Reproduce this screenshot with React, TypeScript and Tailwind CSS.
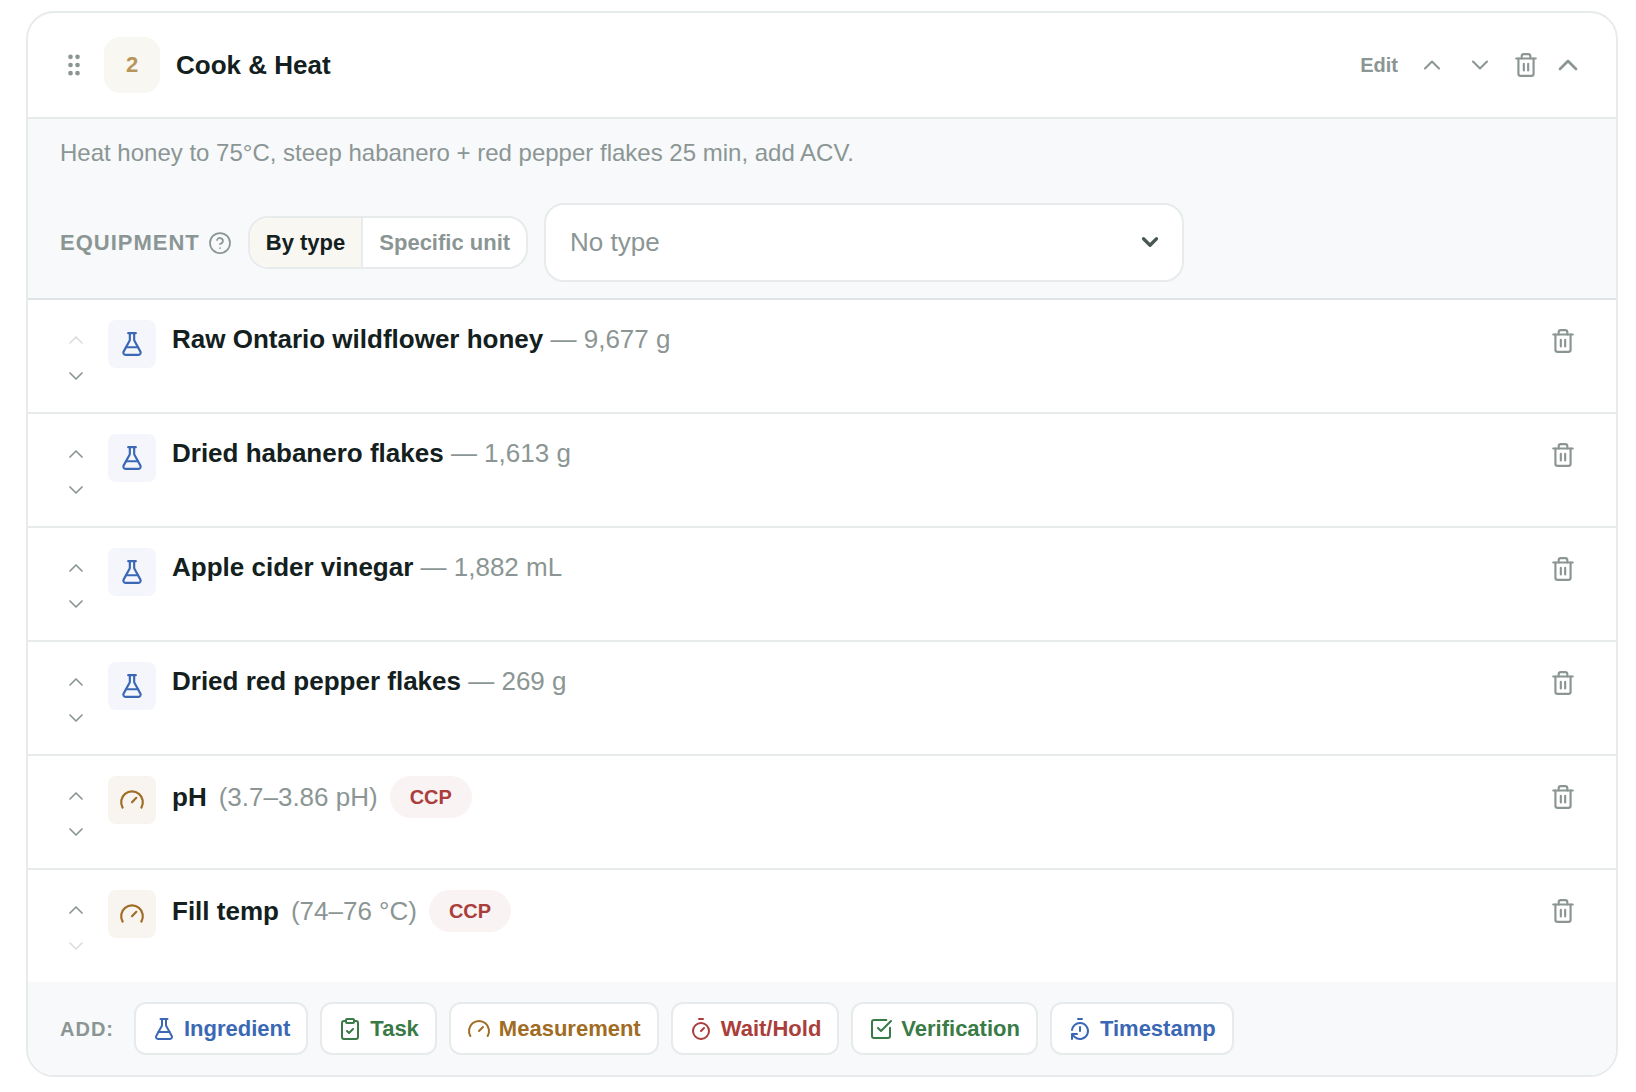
import React, { useState } from "react";
import {
  ChevronDown,
  ChevronUp,
  CircleHelp,
  ClipboardCheck,
  FlaskConical,
  Gauge,
  GripVertical,
  SquareCheckBig,
  Timer,
  TimerReset,
  Trash2,
} from "lucide-react";

type Item = {
  kind: "ingredient" | "measurement";
  name: string;
  detail: string;
  ccp?: boolean;
};

const items: Item[] = [
  { kind: "ingredient", name: "Raw Ontario wildflower honey", detail: "9,677 g" },
  { kind: "ingredient", name: "Dried habanero flakes", detail: "1,613 g" },
  { kind: "ingredient", name: "Apple cider vinegar", detail: "1,882 mL" },
  { kind: "ingredient", name: "Dried red pepper flakes", detail: "269 g" },
  { kind: "measurement", name: "pH", detail: "(3.7–3.86 pH)", ccp: true },
  { kind: "measurement", name: "Fill temp", detail: "(74–76 °C)", ccp: true },
];

const addButtons = [
  { label: "Ingredient", icon: FlaskConical, color: "text-[#3b68b5]" },
  { label: "Task", icon: ClipboardCheck, color: "text-[#3a7a46]" },
  { label: "Measurement", icon: Gauge, color: "text-[#a06c24]" },
  { label: "Wait/Hold", icon: Timer, color: "text-[#a93e3b]" },
  { label: "Verification", icon: SquareCheckBig, color: "text-[#3a7a46]" },
  { label: "Timestamp", icon: TimerReset, color: "text-[#3b68b5]" },
];

function ItemRow({ item, first, last }: { item: Item; first: boolean; last: boolean }) {
  const ingredient = item.kind === "ingredient";
  return (
    <li className="flex items-start gap-4 px-8 py-5 border-b-2 border-[#e7ebeb] last:border-b-0">
      <div className="flex flex-col gap-1 pt-1 text-[#8b9694]">
        <button
          aria-label="Move item up"
          disabled={first}
          className="flex size-8 items-center justify-center disabled:opacity-30"
        >
          <ChevronUp size={24} strokeWidth={1.75} />
        </button>
        <button
          aria-label="Move item down"
          disabled={last}
          className="flex size-8 items-center justify-center disabled:opacity-30"
        >
          <ChevronDown size={24} strokeWidth={1.75} />
        </button>
      </div>
      {ingredient ? (
        <span className="flex size-12 items-center justify-center rounded-lg bg-[#f4f6fb] text-[#3b68b5]">
          <FlaskConical size={26} />
        </span>
      ) : (
        <span className="flex size-12 items-center justify-center rounded-lg bg-[#f8f4ef] text-[#a06c24]">
          <Gauge size={26} />
        </span>
      )}
      {ingredient ? (
        <p className="flex-1 text-[26px] leading-[39px] text-[#8b9694]">
          <strong className="font-bold text-[#13201e]">{item.name}</strong> — {item.detail}
        </p>
      ) : (
        <div className="flex flex-1 items-center gap-3 text-[26px] leading-[39px] text-[#8b9694]">
          <strong className="font-bold text-[#13201e]">{item.name}</strong>
          <span>{item.detail}</span>
          {item.ccp && (
            <span className="rounded-full bg-[#faf3f4] px-5 py-1.5 text-[20px] leading-[30px] font-bold text-[#a93e3b]">
              CCP
            </span>
          )}
        </div>
      )}
      <button aria-label="Delete item" className="p-2 text-[#8b9694]">
        <Trash2 size={26} />
      </button>
    </li>
  );
}

export default function App() {
  const [mode, setMode] = useState("type");
  return (
    <div className="bg-white py-[11px] pr-[18px] pl-[26px] font-['Liberation_Sans',Arial,sans-serif] text-[#13201e]">
      <section className="overflow-hidden rounded-[28px] border-2 border-[#e7ebeb] bg-white">
        {/* header */}
        <header className="flex items-center gap-4 border-b-2 border-[#e7ebeb] px-8 py-6">
          <GripVertical size={28} className="text-[#8b9694]" />
          <span className="flex size-14 items-center justify-center rounded-2xl bg-[#f8f7f2] text-[22px] leading-8 font-bold text-[#b8955a]">
            2
          </span>
          <h2 className="flex-1 text-[26px] leading-[39px] font-bold">Cook &amp; Heat</h2>
          <div className="flex items-center gap-2 text-[#8b9694]">
            <button className="px-1.5 text-[20px] leading-[30px] font-bold">Edit</button>
            <button aria-label="Move step up" className="flex size-10 items-center justify-center">
              <ChevronUp size={28} strokeWidth={1.75} />
            </button>
            <button aria-label="Move step down" className="flex size-10 items-center justify-center">
              <ChevronDown size={28} strokeWidth={1.75} />
            </button>
            <button aria-label="Delete step" className="flex h-10 w-9 items-center justify-center">
              <Trash2 size={26} />
            </button>
            <button aria-label="Collapse step">
              <ChevronUp size={32} />
            </button>
          </div>
        </header>

        {/* description + equipment */}
        <div className="flex flex-col gap-8 border-b-2 border-[#e0e4e6] bg-[#f7f9fb] px-8 py-4">
          <p className="text-[24px] leading-9 text-[#8b9694]">
            Heat honey to 75°C, steep habanero + red pepper flakes 25 min, add ACV.
          </p>
          <div className="flex items-center gap-4">
            <div className="flex items-center gap-2 text-[#8b9694]">
              <label htmlFor="equipment" className="text-[22px] leading-[33px] font-bold tracking-[1px]">
                EQUIPMENT
              </label>
              <button aria-label="Equipment help">
                <CircleHelp size={24} strokeWidth={1.75} />
              </button>
            </div>
            <div className="flex overflow-hidden rounded-[20px] border-2 border-[#e7ebeb] bg-white text-[22px] leading-[33px] font-bold">
              <button
                onClick={() => setMode("type")}
                className={mode === "type" ? "bg-[#f8f7f2] px-4 py-2" : "px-4 py-2 text-[#8b9694]"}
              >
                By type
              </button>
              <button
                onClick={() => setMode("unit")}
                className={
                  mode === "unit"
                    ? "border-l-2 border-[#e7ebeb] bg-[#f8f7f2] px-4 py-2"
                    : "border-l-2 border-[#e7ebeb] px-4 py-2 text-[#8b9694]"
                }
              >
                Specific unit
              </button>
            </div>
            <div className="relative w-full max-w-[640px]">
              <select
                id="equipment"
                className="h-[79px] w-full appearance-none rounded-[20px] border-2 border-[#e7ebeb] bg-white px-6 text-[26px] text-[#8b9694]"
              >
                <option>No type</option>
              </select>
              <ChevronDown
                size={26}
                strokeWidth={3}
                className="pointer-events-none absolute top-[26px] right-[21px] text-[#4a5755]"
              />
            </div>
          </div>
        </div>

        {/* items */}
        <ul>
          {items.map((item, i) => (
            <ItemRow key={item.name} item={item} first={i === 0} last={i === items.length - 1} />
          ))}
        </ul>

        {/* add bar */}
        <footer className="flex flex-wrap items-center gap-3 bg-[#f7f9fb] px-8 py-5">
          <span className="mr-2 text-[20px] leading-[30px] font-bold tracking-[1px] text-[#8b9694]">ADD:</span>
          {addButtons.map(({ label, icon: Icon, color }) => (
            <button
              key={label}
              className={`flex items-center gap-2 rounded-xl border-2 border-[#e7ebeb] bg-white px-4 py-2 text-[22px] leading-[33px] font-bold ${color}`}
            >
              <Icon size={24} />
              {label}
            </button>
          ))}
        </footer>
      </section>
    </div>
  );
}
